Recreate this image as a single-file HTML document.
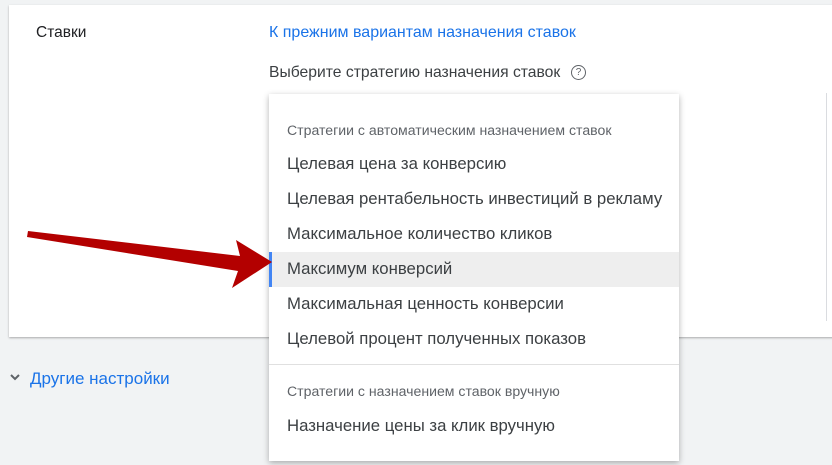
<!DOCTYPE html>
<html><head><meta charset="utf-8"><style>
body{margin:0;width:832px;height:465px;background:#f1f3f4;font-family:"Liberation Sans",sans-serif;position:relative;overflow:hidden}
.card{position:absolute;left:9px;top:5px;width:830px;height:332px;background:#fff;box-shadow:0 1px 2px rgba(0,0,0,.3)}
.t{position:absolute;white-space:nowrap}
.dd{position:absolute;left:269px;top:94px;width:410px;height:367px;background:#fff;box-shadow:0 2px 6px rgba(0,0,0,.3)}
.it{position:absolute;left:18px;font-size:16.75px;color:#3c4043;white-space:nowrap;line-height:20px}
.hd{position:absolute;left:18px;font-size:14.1px;color:#5f6368;white-space:nowrap}
</style></head><body>
<div class="card"></div>
<div style="position:absolute;left:826px;top:93px;width:1px;height:228px;background:#dadce0"></div>
<div class="t" style="left:36px;top:24px;font-size:15.5px;color:#202124">Ставки</div>
<div class="t" style="left:269px;top:24px;font-size:16px;color:#1a73e8">К прежним вариантам назначения ставок</div>
<div class="t" style="left:269px;top:64px;font-size:15.7px;color:#3c4043">Выберите стратегию назначения ставок</div>
<div style="position:absolute;left:571px;top:65px;width:13px;height:13px;border:1.3px solid #5f6368;border-radius:50%;font-size:10px;line-height:13px;text-align:center;color:#5f6368">?</div>
<div class="t" style="left:30px;top:369px;font-size:17px;color:#1a73e8">Другие настройки</div>
<svg style="position:absolute;left:9px;top:373px" width="12" height="10"><path d="M2 2 L6 6 L10 2" stroke="#5f6368" stroke-width="2" fill="none"/></svg>
<div class="dd">
<div class="hd" style="top:28px">Стратегии с автоматическим назначением ставок</div>
<div class="it" style="top:60px">Целевая цена за конверсию</div>
<div class="it" style="top:95px">Целевая рентабельность инвестиций в рекламу</div>
<div class="it" style="top:130px">Максимальное количество кликов</div>
<div style="position:absolute;left:0;top:158px;width:410px;height:35px;background:#eeeeee;border-left:3px solid #4285f4;box-sizing:border-box"></div>
<div class="it" style="top:165px">Максимум конверсий</div>
<div class="it" style="top:200px">Максимальная ценность конверсии</div>
<div class="it" style="top:235px">Целевой процент полученных показов</div>
<div style="position:absolute;left:0;top:270px;width:410px;height:1px;background:#e0e0e0"></div>
<div class="hd" style="top:289px">Стратегии с назначением ставок вручную</div>
<div class="it" style="top:322px">Назначение цены за клик вручную</div>
</div>
<svg style="position:absolute;left:0;top:0" width="832" height="465"><path d="M28 231 L240 256 L236 240 L272 262 L232 288 L238 271 L27 237 Z" fill="#b30000"/></svg>
</body></html>
